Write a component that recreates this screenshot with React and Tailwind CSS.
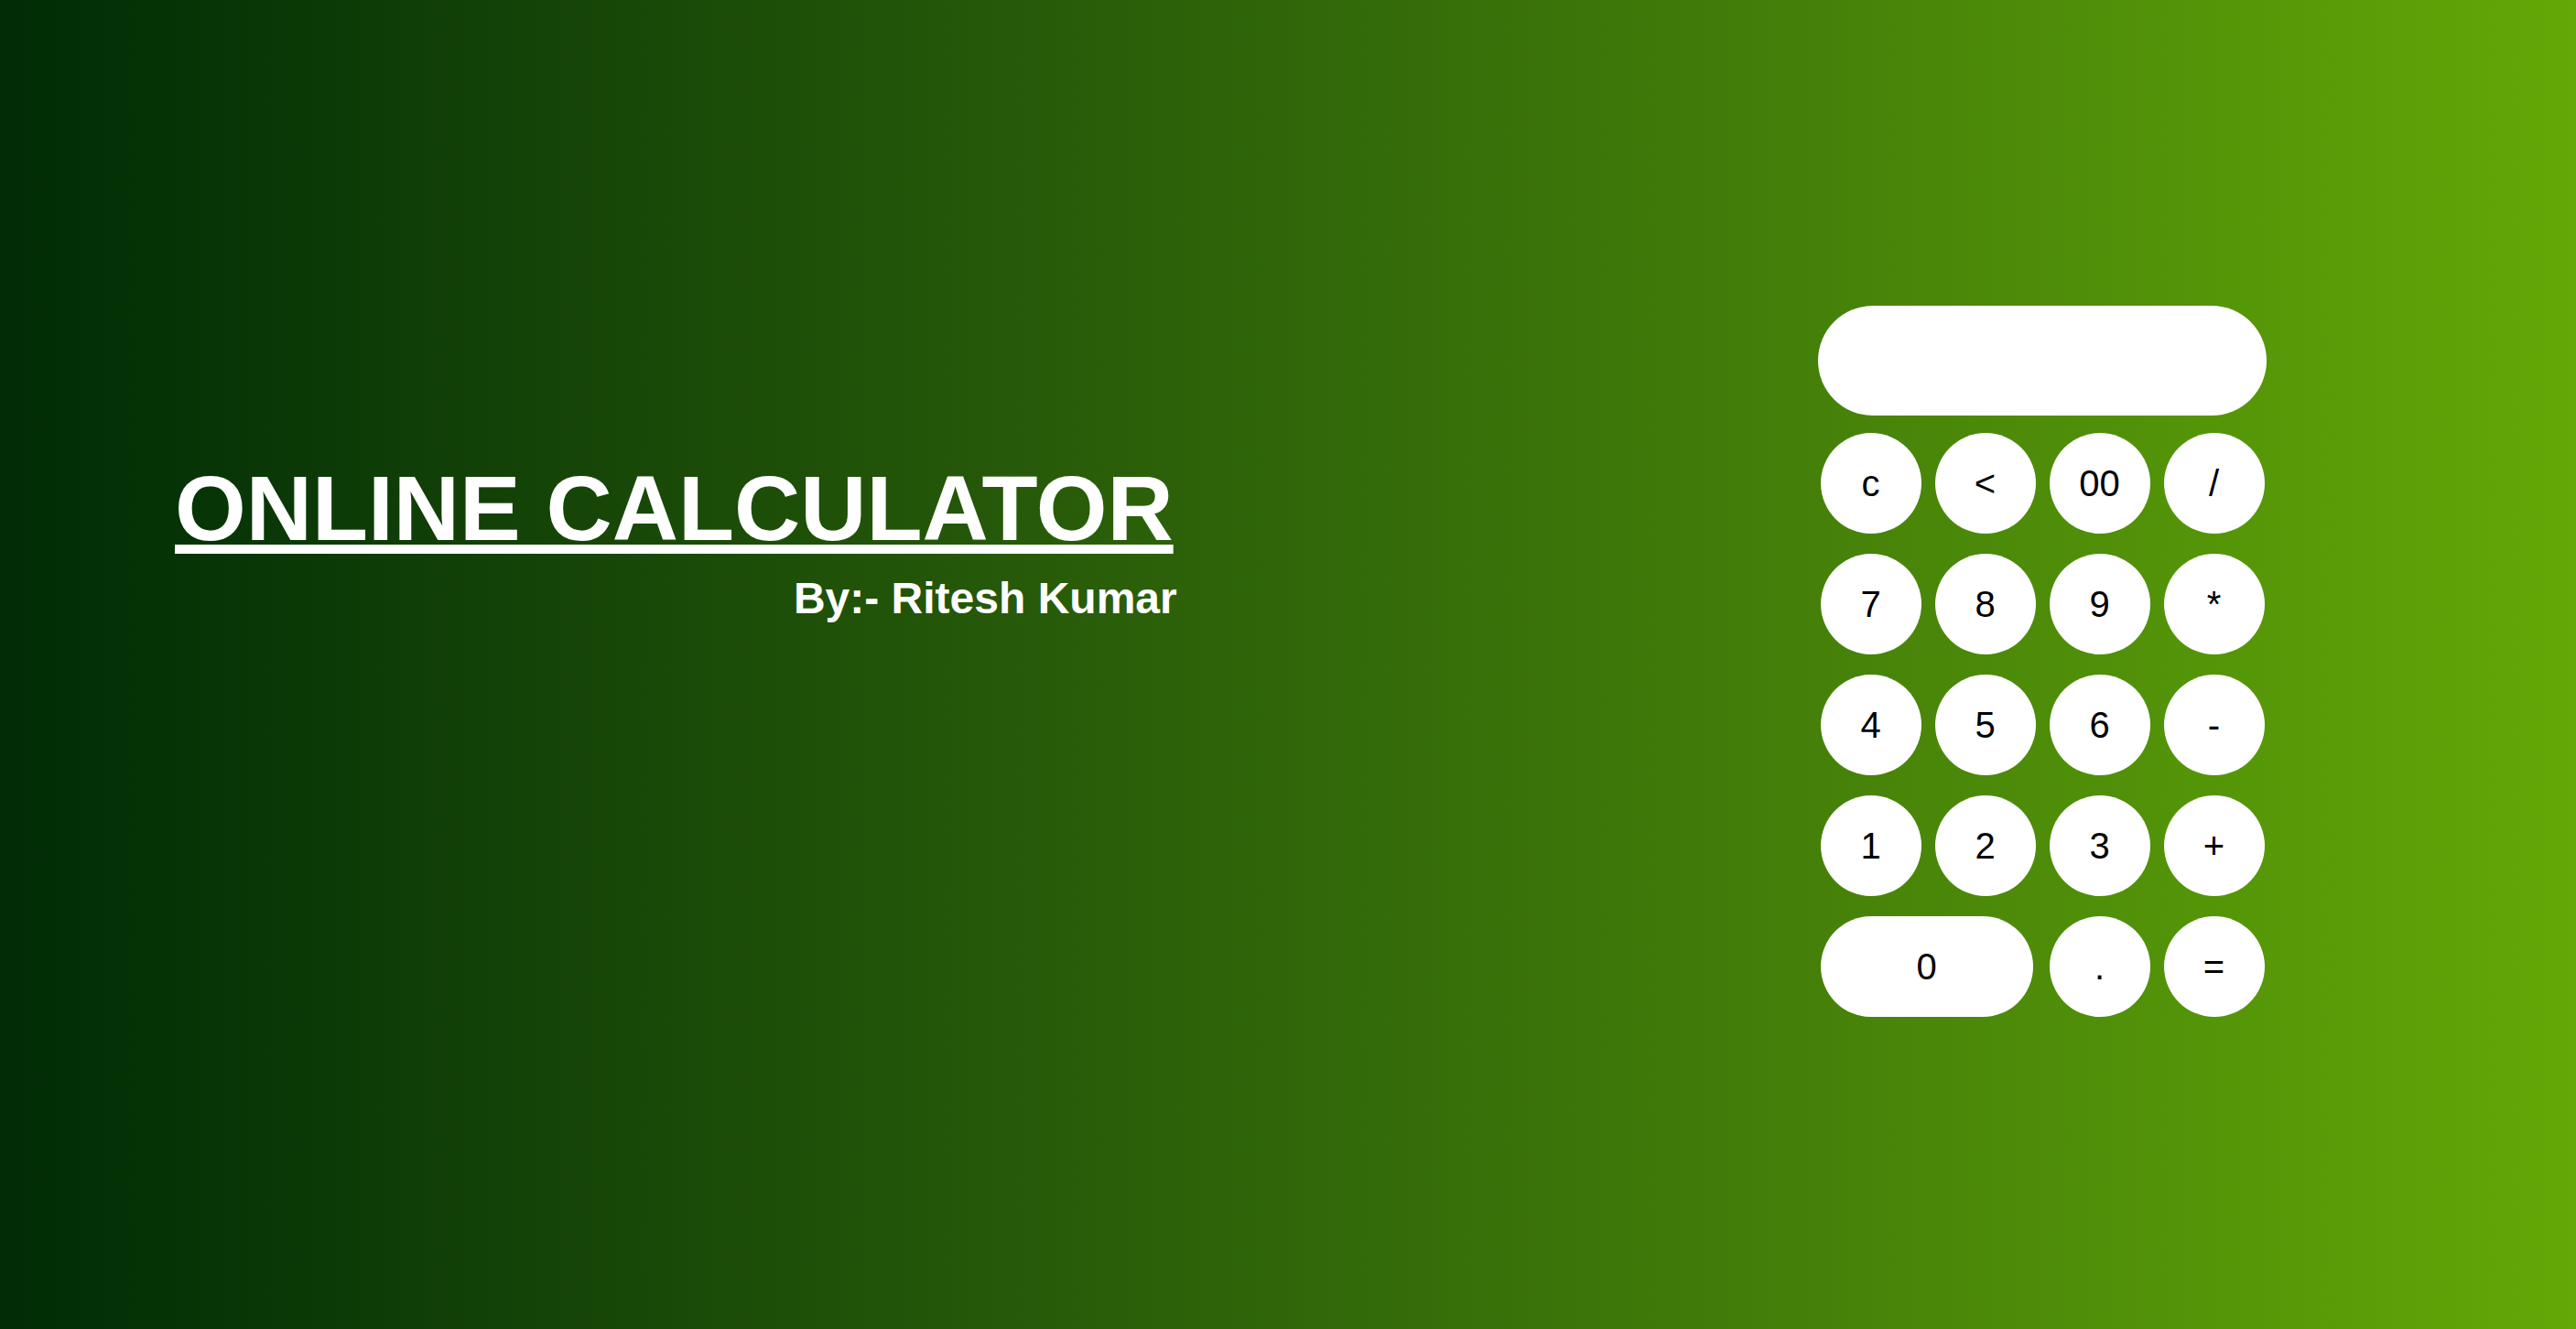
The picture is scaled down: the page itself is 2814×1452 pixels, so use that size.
import React from 'react';

const rows = [
  ['c', '<', '00', '/'],
  ['7', '8', '9', '*'],
  ['4', '5', '6', '-'],
  ['1', '2', '3', '+'],
];

function Key({label, wide}) {
  return (
    <button
      className={
        'h-[110px] rounded-full bg-white text-black text-[40px] leading-none flex items-center justify-center ' +
        (wide ? 'col-span-2 w-[232px]' : 'w-[110px]')
      }
    >
      {label}
    </button>
  );
}

export default function App() {
  return (
    <div className="w-full h-[1452px] flex items-start bg-linear-to-r from-[#012c05] to-[#63a806] font-['Liberation_Sans',Arial,sans-serif] overflow-hidden">
      <div className="pl-[191px] pt-[499px]">
        <div className="w-fit">
          <h1 className="text-white font-bold text-[100px] leading-[112px] underline">ONLINE CALCULATOR</h1>
          <h3 className="text-white font-bold text-[48px] leading-[54px] text-right mt-[16px] -mr-[4px]">
            By:- Ritesh Kumar
          </h3>
        </div>
      </div>
      <div className="ml-auto mr-[338px] mt-[334px] w-[490px]">
        <div className="h-[120px] w-full rounded-full bg-white" />
        <div className="mt-[19px] mx-auto w-[485px] grid grid-cols-4 gap-x-[15px] gap-y-[22px]">
          {rows.map((row) => row.map((k) => <Key key={k} label={k} />))}
          <Key label="0" wide />
          <Key label="." />
          <Key label="=" />
        </div>
      </div>
    </div>
  );
}
